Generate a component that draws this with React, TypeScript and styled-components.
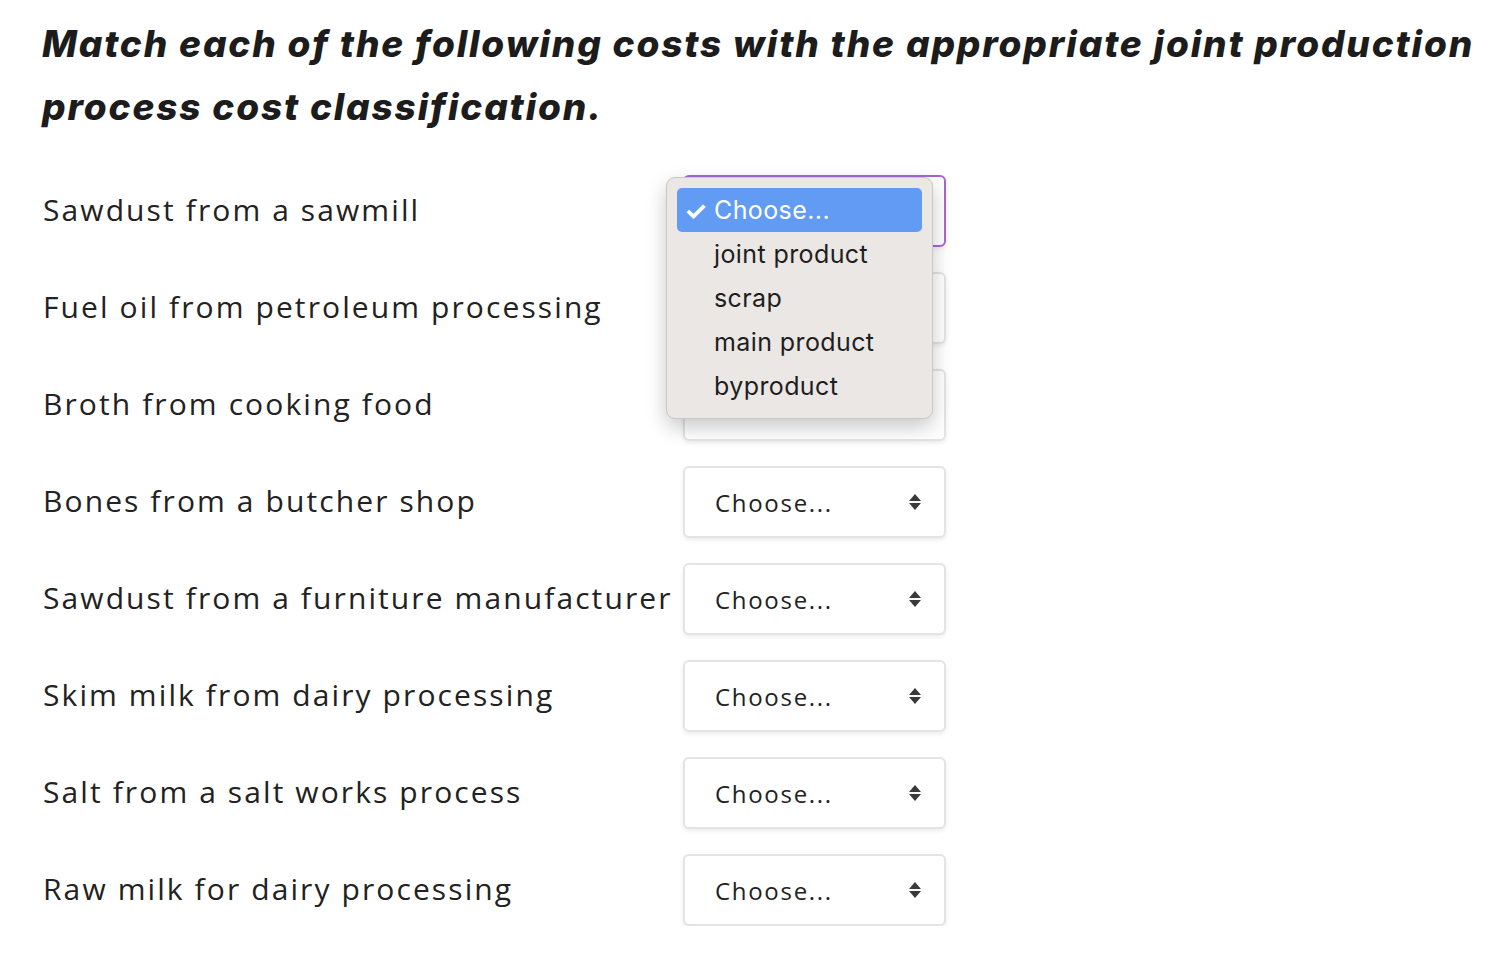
import styled, { createGlobalStyle } from "styled-components";

const GlobalStyle = createGlobalStyle`
  body {
    margin: 0;
    background: #ffffff;
    font-family: "Inter", "Open Sans", sans-serif;
    color: #1f1f1f;
  }
`;

const costs = [
  "Sawdust from a sawmill",
  "Fuel oil from petroleum processing",
  "Broth from cooking food",
  "Bones from a butcher shop",
  "Sawdust from a furniture manufacturer",
  "Skim milk from dairy processing",
  "Salt from a salt works process",
  "Raw milk for dairy processing",
];

const options = ["joint product", "scrap", "main product", "byproduct"];

const App = () => {
  return (
    <>
      <GlobalStyle />
      <Page>
        <Title>
          Match each of the following costs with the appropriate joint production process cost classification.
        </Title>
        <Grid>
          {costs.map((c, i) => (
            <Row key={c}>
              <Label>{c}</Label>
              <SelectWrap>
                <SelectBox $focused={i === 0}>
                  {/* rows under the open menu keep their text hidden */}
                  <SelectText $covered={i < 3}>Choose...</SelectText>
                  <Arrows />
                </SelectBox>
                {i === 0 && (
                  <Menu>
                    <MenuItem $active>
                      <Check>✓</Check>Choose...
                    </MenuItem>
                    {options.map((o) => (
                      <MenuItem key={o}>{o}</MenuItem>
                    ))}
                  </Menu>
                )}
              </SelectWrap>
            </Row>
          ))}
        </Grid>
      </Page>
    </>
  );
};

const Arrows = () => (
  <svg width="14" height="18" viewBox="0 0 14 18">
    <path d="M7 1 L13 8 H1 Z" fill="#3a3a3a" />
    <path d="M7 17 L13 10 H1 Z" fill="#3a3a3a" />
  </svg>
);

const Page = styled.div`
  padding: 12px 0 0 42px;
`;

const Title = styled.h1`
  margin: 0 0 37px 0;
  font-family: "Inter", sans-serif;
  font-style: italic;
  font-weight: 800;
  font-size: 37px;
  line-height: 63px;
  width: 1450px;
  color: #1c1c1c;
  letter-spacing: 1.85px;
`;

const Grid = styled.div`
  display: flex;
  flex-direction: column;
  gap: 25px;
`;

const Row = styled.div`
  display: grid;
  grid-template-columns: 641px 263px;
  align-items: center;
  height: 72px;
`;

const Label = styled.div`
  font-family: "Open Sans", sans-serif;
  font-size: 30px;
  letter-spacing: 2.1px;
  color: #222;
  padding-left: 1px;
  white-space: nowrap;
  margin-top: -3px;
`;

const SelectWrap = styled.div`
  position: relative;
  height: 72px;
`;

const SelectBox = styled.div<{ $focused?: boolean }>`
  box-sizing: border-box;
  height: 72px;
  display: flex;
  align-items: center;
  justify-content: space-between;
  padding: 0 22px 0 30px;
  border: ${(p) => (p.$focused ? "2px solid #a566d6" : "2px solid #e4e4e4")};
  border-radius: 6px;
  background: #fff;
  box-shadow: 0 2px 4px rgba(0, 0, 0, 0.08);
  font-family: "Open Sans", sans-serif;
  font-size: 24px;
  letter-spacing: 1.7px;
  color: #222;
`;

const SelectText = styled.span<{ $covered?: boolean }>`
  visibility: ${(p) => (p.$covered ? "hidden" : "visible")};
`;

const Menu = styled.div`
  position: absolute;
  left: -17px;
  top: 2px;
  width: 267px;
  box-sizing: border-box;
  padding: 10px 10px;
  background: #ebe7e5;
  border: 1px solid #c9c6c4;
  border-radius: 9px;
  box-shadow: 0 8px 20px rgba(0, 0, 0, 0.22);
  z-index: 5;
`;

const MenuItem = styled.div<{ $active?: boolean }>`
  position: relative;
  height: 44px;
  display: flex;
  align-items: center;
  padding-left: 37px;
  border-radius: 5px;
  font-family: "Inter", sans-serif;
  font-size: 25px;
  letter-spacing: 0.4px;
  color: ${(p) => (p.$active ? "#fff" : "#1e1e1e")};
  background: ${(p) => (p.$active ? "#619bf4" : "transparent")};
`;

const Check = styled.span`
  position: absolute;
  left: 7px;
  font-size: 26px;
  font-weight: 700;
`;

export default App;
